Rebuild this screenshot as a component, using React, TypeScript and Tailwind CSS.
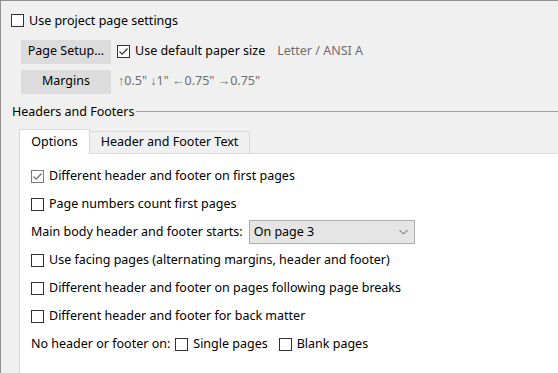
import React from "react";

function CheckBox({ checked = false, muted = false }: { checked?: boolean; muted?: boolean }) {
  return (
    <span
      className={`inline-flex w-[13px] h-[13px] shrink-0 items-center justify-center bg-white border ${
        muted ? "border-[#7a7a7a]" : "border-[#333333]"
      }`}
    >
      {checked && (
        <svg width="11" height="11" viewBox="0 0 11 11" fill="none">
          <path
            d="M1.5 5.5 L4.2 8.2 L9.5 2.5"
            stroke={muted ? "#6a6a6a" : "#333333"}
            strokeWidth="1.2"
          />
        </svg>
      )}
    </span>
  );
}

function CheckRow({ label, checked, muted }: { label: string; checked?: boolean; muted?: boolean }) {
  return (
    <div className="h-[28px] flex items-center gap-[5px]">
      <CheckBox checked={checked} muted={muted} />
      <span>{label}</span>
    </div>
  );
}

export default function App() {
  return (
    <div className="w-[558px] h-[373px] overflow-hidden bg-[#f0f0f0] border-t border-l border-[#8f8f8f] text-[12.5px] text-black font-['Segoe_UI','Noto_Sans',sans-serif] leading-none">
      {/* top option */}
      <div className="h-[38px] pl-[10px] pt-[13px] flex items-start gap-[5px]">
        <CheckBox />
        <span className="mt-[1px]">Use project page settings</span>
      </div>

      {/* page setup row */}
      <div className="pl-[20px] flex items-center h-[25px]">
        <button className="w-[90px] h-[24px] bg-[#dcdcdc] text-black">Page Setup...</button>
        <div className="ml-[6px] flex items-center gap-[5px]">
          <CheckBox checked />
          <span>Use default paper size</span>
        </div>
        <span className="ml-[12px] text-[#6e6e6e]">Letter / ANSI A</span>
      </div>

      {/* margins row */}
      <div className="pl-[20px] mt-[5px] flex items-center h-[25px]">
        <button className="w-[90px] h-[24px] bg-[#dcdcdc] text-black">Margins</button>
        <span className="ml-[7px] text-[#6e6e6e]">↑0.5" ↓1" ←0.75" →0.75"</span>
      </div>

      {/* group header */}
      <div className="mt-[6px] h-[20px] pl-[11px] flex items-start gap-[2px]">
        <span className="mt-[6px]">Headers and Footers</span>
        <div className="flex-1 h-px mt-[11px] bg-[#a0a0a0]" />
      </div>

      {/* tabs */}
      <div className="ml-[18px] mt-[9px]">
        <div className="flex items-end h-[24px]">
          <div className="w-[71px] h-[25px] -mb-px bg-white border border-b-0 border-[#d9d9d9] flex items-center justify-center relative z-10">
            Options
          </div>
          <div className="w-[160px] h-[22px] bg-[#f0f0f0] border border-l-0 border-b-0 border-[#d9d9d9] flex items-center justify-center">
            Header and Footer Text
          </div>
        </div>
        <div className="bg-white border-t border-l border-[#d9d9d9] h-[230px] pl-[11px] pt-[8px]">
          <CheckRow label="Different header and footer on first pages" checked muted />
          <CheckRow label="Page numbers count first pages" />
          <div className="h-[28px] flex items-center">
            <span>Main body header and footer starts:</span>
            <div className="ml-[6px] w-[166px] h-[24px] bg-[#e5e5e5] border border-[#adadad] flex items-center justify-between pl-[4px] pr-[6px]">
              <span>On page 3</span>
              <svg width="9" height="6" viewBox="0 0 9 6" fill="none">
                <path d="M0.5 1 L4.5 5 L8.5 1" stroke="#555" strokeWidth="1" />
              </svg>
            </div>
          </div>
          <CheckRow label="Use facing pages (alternating margins, header and footer)" />
          <CheckRow label="Different header and footer on pages following page breaks" />
          <CheckRow label="Different header and footer for back matter" />
          <div className="h-[28px] flex items-center">
            <span>No header or footer on:</span>
            <div className="ml-[5px] flex items-center gap-[5px]">
              <CheckBox />
              <span>Single pages</span>
            </div>
            <div className="ml-[11px] flex items-center gap-[5px]">
              <CheckBox />
              <span>Blank pages</span>
            </div>
          </div>
        </div>
      </div>
    </div>
  );
}
